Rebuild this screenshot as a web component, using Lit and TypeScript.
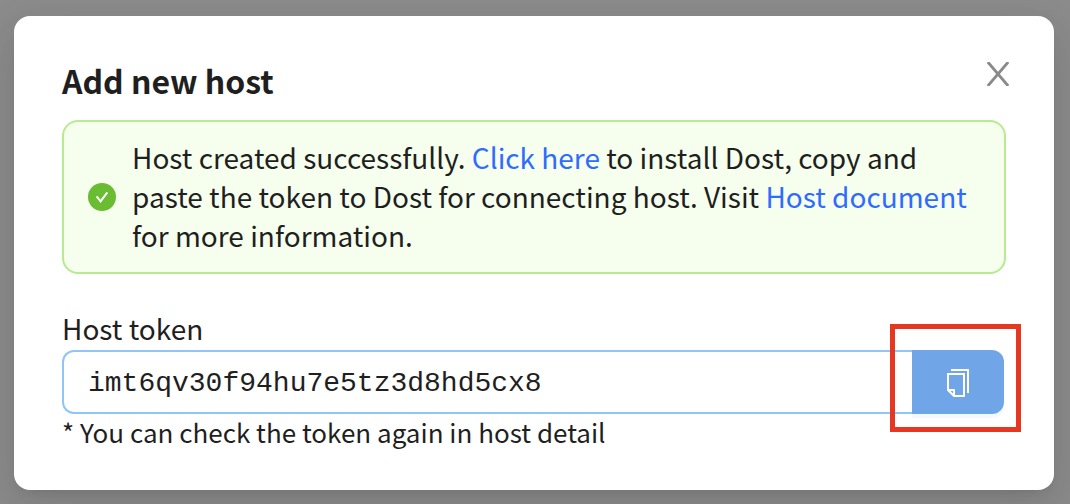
import { LitElement, html, css } from "lit";
import { customElement, state } from "lit/decorators.js";

@customElement("app-root")
export class AppRoot extends LitElement {
  static styles = css`
    :host {
      display: block;
      box-sizing: border-box;
      min-height: 100vh;
      padding: 16px 16px 14px 14px;
      background: #8c8c8c;
      color: #1f1f1f;
      font-family: "Noto Sans CJK KR", "Noto Sans CJK JP", sans-serif;
      font-size: 28px;
      line-height: 40px;
    }
    * {
      box-sizing: border-box;
    }
    .dialog {
      padding: 44px 48px 36px;
      border-radius: 16px;
      background: #fff;
      box-shadow: 0 12px 32px rgba(0, 0, 0, 0.08), 0 6px 12px -8px rgba(0, 0, 0, 0.12),
        0 18px 56px 16px rgba(0, 0, 0, 0.05);
    }
    .header {
      display: flex;
      justify-content: space-between;
      align-items: flex-start;
    }
    .title {
      margin: 0;
      font-size: 32px;
      font-weight: 700;
      line-height: 40px;
    }
    .close {
      display: flex;
      margin: 2px -4px 0 0;
      padding: 0;
      border: 0;
      background: none;
      color: #8a8a8a;
      cursor: pointer;
    }
    .alert {
      display: flex;
      align-items: center;
      gap: 16px;
      margin-top: 20px;
      padding: 16px 24px 17px;
      border: 2px solid #b7eb8f;
      border-radius: 16px;
      background: #f6ffed;
    }
    .alert-text {
      margin: 0;
      line-height: 39px;
    }
    .alert-icon {
      flex: none;
    }
    a {
      color: #2f6bff;
      text-decoration: none;
    }
    .label {
      display: block;
      margin-top: 34px;
      padding-bottom: 2px;
    }
    .group {
      display: flex;
      padding-right: 2px;
    }
    .token {
      flex: 1;
      min-width: 0;
      height: 64px;
      padding: 2px 24px 0;
      border: 2px solid #91c5f7;
      border-right: 0;
      border-radius: 12px 0 0 12px;
      outline: none;
      background: #fff;
      color: #1f1f1f;
      font-family: "Liberation Mono", monospace;
      font-size: 28px;
    }
    .copy-wrap {
      position: relative;
      display: flex;
    }
    .copy {
      display: flex;
      align-items: center;
      justify-content: center;
      width: 92px;
      height: 64px;
      padding: 2px 0 0;
      border: 0;
      border-radius: 0 12px 12px 0;
      background: #70a6e8;
      box-shadow: 0 4px 0 #f3f9ff;
      color: #fff;
      cursor: pointer;
    }
    .highlight {
      position: absolute;
      inset: -26px -17px -18px -22px;
      border: 5px solid #e63820;
      pointer-events: none;
    }
    .hint {
      margin: 0;
      padding-bottom: 4px;
      font-size: 26px;
      line-height: 36px;
    }
  `;

  @state() private token = "imt6qv30f94hu7e5tz3d8hd5cx8";

  private copyToken() {
    navigator.clipboard?.writeText(this.token);
  }

  render() {
    return html`
      <section class="dialog" role="dialog" aria-labelledby="title">
        <header class="header">
          <h1 class="title" id="title">Add new host</h1>
          <button class="close" type="button" aria-label="Close">
            <svg width="24" height="24" viewBox="0 0 24 24" fill="none" stroke="currentColor" stroke-width="2.8">
              <path d="M1.8 0 22.2 24M22.2 0 1.8 24" />
            </svg>
          </button>
        </header>
        <div class="alert" role="status">
          <svg class="alert-icon" width="28" height="28" viewBox="0 0 28 28" aria-hidden="true">
            <circle cx="14" cy="14" r="14" fill="#6abc32" />
            <path d="m8.6 13.4 4 5 6.7-9" fill="none" stroke="#fff" stroke-width="2" />
          </svg>
          <p class="alert-text">
            Host created successfully. <a href="#install">Click here</a> to install Dost, copy and paste the token to
            Dost for connecting host. Visit <a href="#document">Host document</a> for more information.
          </p>
        </div>
        <label class="label" for="token">Host token</label>
        <div class="group">
          <input class="token" id="token" type="text" readonly .value=${this.token} />
          <div class="copy-wrap">
            <button class="copy" type="button" aria-label="Copy token" @click=${this.copyToken}>
              <svg width="22" height="28" viewBox="0 0 22 28" fill="none" stroke="currentColor" stroke-width="2">
                <path d="M4 1H21V24M1 5H17V27H7L1 21ZM1 21H7V27" />
              </svg>
            </button>
            <span class="highlight"></span>
          </div>
        </div>
        <p class="hint">* You can check the token again in host detail</p>
      </section>
    `;
  }
}
